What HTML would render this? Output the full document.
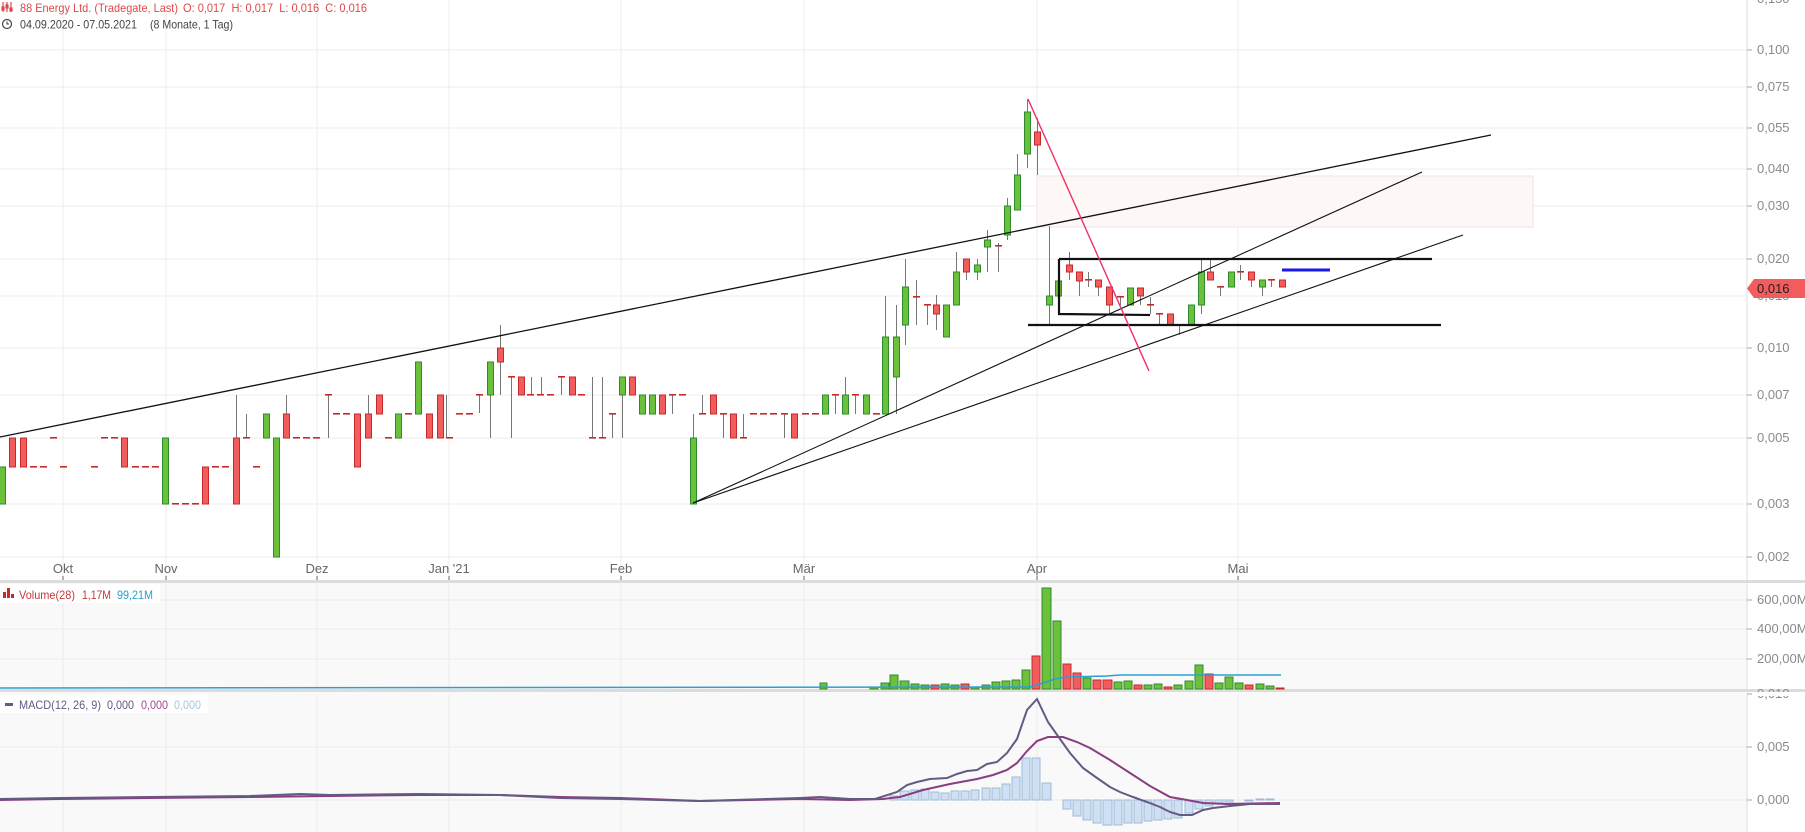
<!DOCTYPE html>
<html><head><meta charset="utf-8">
<style>
html,body{margin:0;padding:0;background:#fff;}
svg{display:block;font-family:"Liberation Sans",sans-serif;}
.g{fill:#6cc13a;stroke:#2e8a2e;stroke-width:1}
.r{fill:#f25c5c;stroke:#c42a2a;stroke-width:1}
.w{stroke:#777;stroke-width:1}
.d{fill:#c42a2a}
.gl{stroke:#ececec;stroke-width:1}
.ax{fill:#8a8a8a;font-size:13px}
.tx{fill:#666;font-size:13px}
.h{fill:#cfe0f4;stroke:#9fbad8;stroke-width:1}
</style></head><body>
<svg width="1805" height="832" viewBox="0 0 1805 832" xmlns="http://www.w3.org/2000/svg">
<g class="gl">
<line x1="0" y1="50" x2="1747" y2="50"/><line x1="0" y1="87" x2="1747" y2="87"/>
<line x1="0" y1="128" x2="1747" y2="128"/><line x1="0" y1="169" x2="1747" y2="169"/>
<line x1="0" y1="206" x2="1747" y2="206"/><line x1="0" y1="259" x2="1747" y2="259"/>
<line x1="0" y1="296" x2="1747" y2="296"/><line x1="0" y1="348" x2="1747" y2="348"/>
<line x1="0" y1="395" x2="1747" y2="395"/><line x1="0" y1="438" x2="1747" y2="438"/>
<line x1="0" y1="504" x2="1747" y2="504"/><line x1="0" y1="557" x2="1747" y2="557"/>
<line x1="63" y1="0" x2="63" y2="580"/><line x1="166" y1="0" x2="166" y2="580"/>
<line x1="317" y1="0" x2="317" y2="580"/><line x1="449" y1="0" x2="449" y2="580"/>
<line x1="621" y1="0" x2="621" y2="580"/><line x1="804" y1="0" x2="804" y2="580"/>
<line x1="1037" y1="0" x2="1037" y2="580"/><line x1="1238" y1="0" x2="1238" y2="580"/>
</g>
<rect x="1037" y="176" width="496" height="51" fill="#fdf7f6" stroke="#f0e6e4" stroke-width="1"/>

<g transform="translate(2,2)" stroke="#e04848" stroke-width="1.2" fill="none">
<line x1="1" y1="0" x2="1" y2="10"/><line x1="5" y1="0" x2="5" y2="10"/><line x1="9" y1="0" x2="9" y2="10"/>
<rect x="0" y="5" width="2" height="3" fill="#e04848"/><rect x="4" y="3" width="2" height="3" fill="#e04848"/><rect x="8" y="6" width="2" height="3" fill="#e04848"/>
</g>
<text x="20" y="12" fill="#e04848" font-size="12" textLength="158" lengthAdjust="spacingAndGlyphs">88 Energy Ltd. (Tradegate, Last)</text>
<text x="183" y="12" fill="#e04848" font-size="12" textLength="184" lengthAdjust="spacingAndGlyphs" xml:space="preserve">O: 0,017  H: 0,017  L: 0,016  C: 0,016</text>
<circle cx="7" cy="24" r="4.5" fill="none" stroke="#444" stroke-width="1.2"/>
<path d="M7 21.5 V24 H9" fill="none" stroke="#444" stroke-width="1.1"/>
<text x="20" y="28.5" fill="#444" font-size="12" textLength="117" lengthAdjust="spacingAndGlyphs">04.09.2020 - 07.05.2021</text>
<text x="150" y="28.5" fill="#444" font-size="12" textLength="83" lengthAdjust="spacingAndGlyphs">(8 Monate, 1 Tag)</text>

<g class="w">
<line x1="236.5" y1="395" x2="236.5" y2="438"/><line x1="246.5" y1="414" x2="246.5" y2="438"/>
<line x1="286.5" y1="395" x2="286.5" y2="414"/><line x1="328.5" y1="395" x2="328.5" y2="438"/>
<line x1="368.5" y1="395" x2="368.5" y2="414"/><line x1="446.5" y1="395" x2="446.5" y2="438"/>
<line x1="479.5" y1="395" x2="479.5" y2="413"/><line x1="490.5" y1="395" x2="490.5" y2="438"/>
<line x1="500.5" y1="325" x2="500.5" y2="395"/><line x1="511.5" y1="377" x2="511.5" y2="438"/>
<line x1="531.5" y1="377" x2="531.5" y2="395"/><line x1="541.5" y1="377" x2="541.5" y2="395"/>
<line x1="561.5" y1="377" x2="561.5" y2="395"/><line x1="592.5" y1="377" x2="592.5" y2="438"/>
<line x1="602.5" y1="377" x2="602.5" y2="438"/><line x1="612.5" y1="414" x2="612.5" y2="438"/>
<line x1="622.5" y1="395" x2="622.5" y2="438"/><line x1="672.5" y1="395" x2="672.5" y2="414"/>
<line x1="693.5" y1="414" x2="693.5" y2="438"/><line x1="702.5" y1="395" x2="702.5" y2="414"/>
<line x1="723.5" y1="414" x2="723.5" y2="438"/><line x1="743.5" y1="414" x2="743.5" y2="438"/>
<line x1="784.5" y1="414" x2="784.5" y2="438"/><line x1="835.5" y1="395" x2="835.5" y2="414"/>
<line x1="845.5" y1="377" x2="845.5" y2="395"/><line x1="855.5" y1="395" x2="855.5" y2="414"/>
<line x1="885.5" y1="296" x2="885.5" y2="337"/><line x1="896.5" y1="305" x2="896.5" y2="414"/>
<line x1="905.5" y1="259" x2="905.5" y2="345"/><line x1="916.5" y1="280" x2="916.5" y2="325"/>
<line x1="927.5" y1="305" x2="927.5" y2="325"/><line x1="936.5" y1="295" x2="936.5" y2="330"/>
<line x1="956.5" y1="252" x2="956.5" y2="280"/><line x1="966.5" y1="259" x2="966.5" y2="280"/>
<line x1="977.5" y1="259" x2="977.5" y2="280"/><line x1="987.5" y1="230" x2="987.5" y2="272"/>
<line x1="998.5" y1="243" x2="998.5" y2="272"/><line x1="1007.5" y1="198" x2="1007.5" y2="240"/>
<line x1="1017.5" y1="154" x2="1017.5" y2="210"/><line x1="1027.5" y1="99" x2="1027.5" y2="168"/>
<line x1="1037.5" y1="118" x2="1037.5" y2="175"/><line x1="1049.5" y1="226" x2="1049.5" y2="325"/>
<line x1="1069.5" y1="252" x2="1069.5" y2="280"/><line x1="1079.5" y1="272" x2="1079.5" y2="296"/>
<line x1="1088.5" y1="272" x2="1088.5" y2="287"/><line x1="1098.5" y1="280" x2="1098.5" y2="296"/>
<line x1="1109.5" y1="287" x2="1109.5" y2="314"/><line x1="1120.5" y1="297" x2="1120.5" y2="305"/>
<line x1="1140.5" y1="288" x2="1140.5" y2="305"/><line x1="1150.5" y1="297" x2="1150.5" y2="314"/>
<line x1="1159.5" y1="314" x2="1159.5" y2="325"/><line x1="1179.5" y1="325" x2="1179.5" y2="335"/>
<line x1="1201.5" y1="259" x2="1201.5" y2="314"/><line x1="1210.5" y1="259" x2="1210.5" y2="280"/>
<line x1="1220.5" y1="287" x2="1220.5" y2="296"/><line x1="1240.5" y1="265" x2="1240.5" y2="280"/>
<line x1="1251.5" y1="272" x2="1251.5" y2="287"/><line x1="1262.5" y1="280" x2="1262.5" y2="296"/>
<line x1="1271.5" y1="280" x2="1271.5" y2="287"/>
</g>
<g class="d">
<rect x="30" y="466" width="7" height="1.6"/><rect x="40" y="466" width="7" height="1.6"/>
<rect x="50" y="437" width="7" height="1.6"/><rect x="60" y="466" width="7" height="1.6"/>
<rect x="91" y="466" width="7" height="1.6"/><rect x="101" y="437" width="7" height="1.6"/>
<rect x="111" y="437" width="7" height="1.6"/><rect x="132" y="466" width="7" height="1.6"/>
<rect x="142" y="466" width="7" height="1.6"/><rect x="152" y="466" width="7" height="1.6"/>
<rect x="172" y="503" width="7" height="1.6"/><rect x="182" y="503" width="7" height="1.6"/>
<rect x="192" y="503" width="7" height="1.6"/><rect x="212" y="466" width="7" height="1.6"/>
<rect x="222" y="466" width="7" height="1.6"/><rect x="243" y="437" width="7" height="1.6"/>
<rect x="253" y="466" width="7" height="1.6"/><rect x="293" y="437" width="7" height="1.6"/>
<rect x="303" y="437" width="7" height="1.6"/><rect x="313" y="437" width="7" height="1.6"/>
<rect x="325" y="394" width="7" height="1.6"/><rect x="333" y="413" width="7" height="1.6"/>
<rect x="343" y="413" width="7" height="1.6"/><rect x="385" y="437" width="7" height="1.6"/>
<rect x="405" y="413" width="7" height="1.6"/><rect x="446" y="437" width="7" height="1.6"/>
<rect x="456" y="413" width="7" height="1.6"/><rect x="466" y="413" width="7" height="1.6"/>
<rect x="476" y="394" width="7" height="1.6"/><rect x="508" y="376" width="7" height="1.6"/>
<rect x="527" y="394" width="7" height="1.6"/><rect x="537" y="394" width="7" height="1.6"/>
<rect x="547" y="394" width="7" height="1.6"/><rect x="558" y="376" width="7" height="1.6"/>
<rect x="578" y="394" width="7" height="1.6"/><rect x="589" y="437" width="7" height="1.6"/>
<rect x="599" y="437" width="7" height="1.6"/><rect x="609" y="413" width="7" height="1.6"/>
<rect x="669" y="394" width="7" height="1.6"/><rect x="679" y="394" width="7" height="1.6"/>
<rect x="699" y="413" width="7" height="1.6"/><rect x="720" y="413" width="7" height="1.6"/>
<rect x="740" y="437" width="7" height="1.6"/><rect x="750" y="413" width="7" height="1.6"/>
<rect x="760" y="413" width="7" height="1.6"/><rect x="770" y="413" width="7" height="1.6"/>
<rect x="781" y="413" width="7" height="1.6"/><rect x="802" y="413" width="7" height="1.6"/>
<rect x="812" y="413" width="7" height="1.6"/><rect x="832" y="394" width="7" height="1.6"/>
<rect x="852" y="394" width="7" height="1.6"/><rect x="873" y="413" width="7" height="1.6"/>
<rect x="913" y="296" width="7" height="1.6"/><rect x="924" y="304" width="7" height="1.6"/>
<rect x="995" y="245" width="7" height="1.6"/><rect x="1085" y="279" width="7" height="1.6"/>
<rect x="1117" y="296" width="7" height="1.6"/><rect x="1147" y="304" width="7" height="1.6"/>
<rect x="1156" y="313" width="7" height="1.6"/><rect x="1217" y="286" width="7" height="1.6"/>
<rect x="1237" y="271" width="7" height="1.6"/><rect x="1268" y="279" width="7" height="1.6"/>
</g>
<g>
<rect class="g" x="-0.5" y="467" width="6" height="37"/>
<rect class="r" x="9.5" y="438" width="6" height="29"/>
<rect class="r" x="20.5" y="438" width="6" height="29"/>
<rect class="r" x="121.5" y="438" width="6" height="29"/>
<rect class="g" x="162.5" y="438" width="6" height="66"/>
<rect class="r" x="202.5" y="467" width="6" height="37"/>
<rect class="r" x="233.5" y="438" width="6" height="66"/>
<rect class="g" x="263.5" y="414" width="6" height="24"/>
<rect class="g" x="273.5" y="438" width="6" height="119"/>
<rect class="r" x="283.5" y="414" width="6" height="24"/>
<rect class="r" x="354.5" y="414" width="6" height="53"/>
<rect class="r" x="365.5" y="414" width="6" height="24"/>
<rect class="r" x="376.5" y="395" width="6" height="19"/>
<rect class="g" x="395.5" y="414" width="6" height="24"/>
<rect class="g" x="415.5" y="362" width="6" height="52"/>
<rect class="r" x="426.5" y="414" width="6" height="24"/>
<rect class="r" x="437.5" y="395" width="6" height="43"/>
<rect class="g" x="487.5" y="362" width="6" height="33"/>
<rect class="r" x="497.5" y="348" width="6" height="14"/>
<rect class="r" x="518.5" y="377" width="6" height="18"/>
<rect class="r" x="569.5" y="377" width="6" height="18"/>
<rect class="g" x="619.5" y="377" width="6" height="18"/>
<rect class="r" x="629.5" y="377" width="6" height="18"/>
<rect class="g" x="639.5" y="395" width="6" height="19"/>
<rect class="g" x="649.5" y="395" width="6" height="19"/>
<rect class="r" x="659.5" y="395" width="6" height="19"/>
<rect class="g" x="690.5" y="438" width="6" height="66"/>
<rect class="r" x="710.5" y="395" width="6" height="19"/>
<rect class="r" x="730.5" y="414" width="6" height="24"/>
<rect class="r" x="791.5" y="414" width="6" height="24"/>
<rect class="g" x="822.5" y="395" width="6" height="19"/>
<rect class="g" x="842.5" y="395" width="6" height="19"/>
<rect class="g" x="863.5" y="395" width="6" height="19"/>
<rect class="g" x="882.5" y="337" width="6" height="77"/>
<rect class="g" x="893.5" y="337" width="6" height="40"/>
<rect class="g" x="902.5" y="287" width="6" height="38"/>
<rect class="r" x="933.5" y="305" width="6" height="9"/>
<rect class="g" x="943.5" y="305" width="6" height="32"/>
<rect class="g" x="953.5" y="272" width="6" height="33"/>
<rect class="r" x="963.5" y="259" width="6" height="13"/>
<rect class="g" x="974.5" y="265" width="6" height="7"/>
<rect class="g" x="984.5" y="240" width="6" height="7"/>
<rect class="g" x="1004.5" y="206" width="6" height="29"/>
<rect class="g" x="1014.5" y="175" width="6" height="35"/>
<rect class="g" x="1024.5" y="112" width="6" height="42"/>
<rect class="r" x="1034.5" y="132" width="6" height="13"/>
<rect class="g" x="1046.5" y="296" width="6" height="9"/>
<rect class="g" x="1055.5" y="281" width="6" height="15"/>
<rect class="r" x="1066.5" y="265" width="6" height="7"/>
<rect class="r" x="1076.5" y="272" width="6" height="9"/>
<rect class="r" x="1095.5" y="280" width="6" height="7"/>
<rect class="r" x="1106.5" y="287" width="6" height="18"/>
<rect class="g" x="1127.5" y="288" width="6" height="17"/>
<rect class="r" x="1137.5" y="288" width="6" height="8"/>
<rect class="r" x="1167.5" y="314" width="6" height="11"/>
<rect class="g" x="1188.5" y="305" width="6" height="20"/>
<rect class="g" x="1198.5" y="272" width="6" height="33"/>
<rect class="r" x="1207.5" y="272" width="6" height="8"/>
<rect class="g" x="1228.5" y="272" width="6" height="15"/>
<rect class="r" x="1248.5" y="272" width="6" height="8"/>
<rect class="g" x="1259.5" y="280" width="6" height="7"/>
<rect class="r" x="1279.5" y="280" width="6" height="7"/>
</g>

<g stroke="#111" fill="none">
<line x1="0" y1="437" x2="1491" y2="135" stroke-width="1.3"/>
<line x1="693" y1="503" x2="1422" y2="172" stroke-width="1.1"/>
<line x1="693" y1="503" x2="1463" y2="235" stroke-width="1.1"/>
<line x1="1059" y1="259" x2="1432" y2="259" stroke-width="2.2"/>
<polyline points="1059,259 1059,314 1150,315" stroke-width="2.2"/>
<line x1="1028" y1="325" x2="1441" y2="325" stroke-width="2.2"/>
</g>
<line x1="1028" y1="99" x2="1149" y2="371" stroke="#f0306a" stroke-width="1.4"/>
<line x1="1282" y1="270" x2="1330" y2="270" stroke="#1a1ae8" stroke-width="3"/>

<line x1="1747" y1="0" x2="1747" y2="832" stroke="#ddd"/>
<g stroke="#aaa">
<line x1="1747" y1="50" x2="1752" y2="50"/><line x1="1747" y1="87" x2="1752" y2="87"/>
<line x1="1747" y1="128" x2="1752" y2="128"/><line x1="1747" y1="169" x2="1752" y2="169"/>
<line x1="1747" y1="206" x2="1752" y2="206"/><line x1="1747" y1="259" x2="1752" y2="259"/>
<line x1="1747" y1="348" x2="1752" y2="348"/><line x1="1747" y1="395" x2="1752" y2="395"/>
<line x1="1747" y1="438" x2="1752" y2="438"/><line x1="1747" y1="504" x2="1752" y2="504"/>
<line x1="1747" y1="557" x2="1752" y2="557"/>
</g>
<g class="ax">
<text x="1757" y="3">0,150</text>
<text x="1757" y="54">0,100</text><text x="1757" y="91">0,075</text>
<text x="1757" y="132">0,055</text><text x="1757" y="173">0,040</text>
<text x="1757" y="210">0,030</text><text x="1757" y="263">0,020</text>
<text x="1757" y="300">0,015</text>
<text x="1757" y="352">0,010</text><text x="1757" y="399">0,007</text>
<text x="1757" y="442">0,005</text><text x="1757" y="508">0,003</text>
<text x="1757" y="561">0,002</text>
</g>
<path d="M1747 288.5 L1754 279 H1805 V298 H1754 Z" fill="#f25c5c"/>
<text x="1757" y="293" font-size="13" fill="#222">0,016</text>

<g class="tx" text-anchor="middle">
<text x="63" y="573">Okt</text><text x="166" y="573">Nov</text><text x="317" y="573">Dez</text>
<text x="449" y="573">Jan '21</text><text x="621" y="573">Feb</text><text x="804" y="573">Mär</text>
<text x="1037" y="573">Apr</text><text x="1238" y="573">Mai</text>
</g>
<g stroke="#666">
<line x1="63" y1="576" x2="63" y2="580"/><line x1="166" y1="576" x2="166" y2="580"/><line x1="317" y1="576" x2="317" y2="580"/>
<line x1="449" y1="576" x2="449" y2="580"/><line x1="621" y1="576" x2="621" y2="580"/><line x1="804" y1="576" x2="804" y2="580"/>
<line x1="1037" y1="576" x2="1037" y2="580"/><line x1="1238" y1="576" x2="1238" y2="580"/>
</g>

<rect x="0" y="580" width="1805" height="3" fill="#dcdcdc"/>
<rect x="0" y="583" width="1747" height="106" fill="#f9f9f9"/>
<rect x="0" y="689" width="1805" height="3" fill="#dcdcdc"/>
<rect x="0" y="692" width="1747" height="140" fill="#f9f9f9"/>
<g class="gl" stroke="#e2e2e2">
<line x1="0" y1="600" x2="1747" y2="600"/><line x1="0" y1="629" x2="1747" y2="629"/><line x1="0" y1="659" x2="1747" y2="659"/>
<line x1="0" y1="694" x2="1747" y2="694"/><line x1="0" y1="747" x2="1747" y2="747"/><line x1="0" y1="800" x2="1747" y2="800"/>
<line x1="63" y1="583" x2="63" y2="689"/><line x1="166" y1="583" x2="166" y2="689"/><line x1="317" y1="583" x2="317" y2="689"/>
<line x1="449" y1="583" x2="449" y2="689"/><line x1="621" y1="583" x2="621" y2="689"/><line x1="804" y1="583" x2="804" y2="689"/>
<line x1="1037" y1="583" x2="1037" y2="689"/><line x1="1238" y1="583" x2="1238" y2="689"/>
<line x1="63" y1="692" x2="63" y2="832"/><line x1="166" y1="692" x2="166" y2="832"/><line x1="317" y1="692" x2="317" y2="832"/>
<line x1="449" y1="692" x2="449" y2="832"/><line x1="621" y1="692" x2="621" y2="832"/><line x1="804" y1="692" x2="804" y2="832"/>
<line x1="1037" y1="692" x2="1037" y2="832"/><line x1="1238" y1="692" x2="1238" y2="832"/>
</g>
<line x1="1747" y1="583" x2="1747" y2="832" stroke="#ddd"/>

<g>
<rect class="g" x="820" y="683" width="7" height="6"/>
<rect class="g" x="870" y="687" width="8" height="2"/>
<rect class="g" x="881" y="683" width="8" height="6"/>
<rect class="g" x="890" y="675" width="8" height="14"/>
<rect class="g" x="900" y="681" width="9" height="8"/>
<rect class="g" x="911" y="684" width="8" height="5"/>
<rect class="g" x="921" y="685" width="8" height="4"/>
<rect class="r" x="931" y="685" width="8" height="4"/>
<rect class="g" x="941" y="684" width="8" height="5"/>
<rect class="g" x="951" y="685" width="8" height="4"/>
<rect class="r" x="961" y="684" width="8" height="5"/>
<rect class="g" x="971" y="687" width="8" height="2"/>
<rect class="g" x="982" y="685" width="8" height="4"/>
<rect class="g" x="992" y="682" width="8" height="7"/>
<rect class="g" x="1002" y="681" width="8" height="8"/>
<rect class="g" x="1012" y="680" width="8" height="9"/>
<rect class="g" x="1022" y="670" width="8" height="19"/>
<rect class="r" x="1032" y="656" width="8" height="33"/>
<rect class="g" x="1042" y="588" width="9" height="101"/>
<rect class="g" x="1053" y="621" width="8" height="68"/>
<rect class="r" x="1063" y="664" width="8" height="25"/>
<rect class="r" x="1073" y="673" width="8" height="16"/>
<rect class="g" x="1083" y="678" width="8" height="11"/>
<rect class="r" x="1093" y="680" width="8" height="9"/>
<rect class="r" x="1103" y="680" width="9" height="9"/>
<rect class="g" x="1114" y="682" width="8" height="7"/>
<rect class="g" x="1124" y="681" width="8" height="8"/>
<rect class="r" x="1134" y="685" width="8" height="4"/>
<rect class="g" x="1144" y="685" width="8" height="4"/>
<rect class="g" x="1154" y="684" width="8" height="5"/>
<rect class="r" x="1164" y="687" width="8" height="2"/>
<rect class="g" x="1174" y="685" width="8" height="4"/>
<rect class="g" x="1185" y="681" width="8" height="8"/>
<rect class="g" x="1195" y="665" width="8" height="24"/>
<rect class="r" x="1205" y="674" width="8" height="15"/>
<rect class="g" x="1215" y="683" width="8" height="6"/>
<rect class="g" x="1225" y="677" width="8" height="12"/>
<rect class="g" x="1235" y="683" width="8" height="6"/>
<rect class="r" x="1245" y="685" width="8" height="4"/>
<rect class="g" x="1256" y="684" width="8" height="5"/>
<rect class="g" x="1266" y="686" width="8" height="3"/>
<rect class="r" x="1276" y="688" width="8" height="1"/>
</g>
<polyline fill="none" stroke="#2e9fd0" stroke-width="1.6" points="0,688 1030,687 1040,684 1055,679 1067,677 1107,676 1120,675 1281,675"/>
<g stroke="#aaa">
<line x1="1747" y1="600" x2="1752" y2="600"/><line x1="1747" y1="629" x2="1752" y2="629"/><line x1="1747" y1="659" x2="1752" y2="659"/>
<line x1="1747" y1="694" x2="1752" y2="694"/><line x1="1747" y1="747" x2="1752" y2="747"/><line x1="1747" y1="800" x2="1752" y2="800"/>
</g>
<g class="ax">
<text x="1757" y="604">600,00M</text><text x="1757" y="633">400,00M</text><text x="1757" y="663">200,00M</text>
<text x="1757" y="698">0,010</text><text x="1757" y="751">0,005</text><text x="1757" y="804">0,000</text>
</g>
<rect x="0" y="583" width="1747" height="2" fill="#f9f9f9"/>
<rect x="0" y="692" width="1747" height="3" fill="#f9f9f9"/>
<rect x="1752" y="692" width="53" height="4" fill="#fff"/>

<rect x="0" y="584" width="160" height="19" fill="#fff"/>
<rect x="3" y="592" width="3" height="6" fill="#c42a2a"/><rect x="7" y="588" width="3" height="10" fill="#c42a2a"/><rect x="11" y="594" width="3" height="4" fill="#c42a2a"/>
<text x="19" y="599" font-size="12" fill="#c43a3a" textLength="56" lengthAdjust="spacingAndGlyphs">Volume(28)</text>
<text x="82" y="599" font-size="12" fill="#c43a3a" textLength="29" lengthAdjust="spacingAndGlyphs">1,17M</text>
<text x="117" y="599" font-size="12" fill="#2e9fd0" textLength="36" lengthAdjust="spacingAndGlyphs">99,21M</text>

<g>
<rect class="h" x="890" y="796" width="8" height="4"/>
<rect class="h" x="900" y="791" width="9" height="9"/>
<rect class="h" x="911" y="790" width="8" height="10"/>
<rect class="h" x="921" y="789" width="8" height="11"/>
<rect class="h" x="931" y="792" width="8" height="8"/>
<rect class="h" x="941" y="793" width="8" height="7"/>
<rect class="h" x="951" y="791" width="8" height="9"/>
<rect class="h" x="961" y="791" width="8" height="9"/>
<rect class="h" x="971" y="790" width="8" height="10"/>
<rect class="h" x="982" y="788" width="8" height="12"/>
<rect class="h" x="992" y="788" width="8" height="12"/>
<rect class="h" x="1002" y="784" width="8" height="16"/>
<rect class="h" x="1012" y="777" width="8" height="23"/>
<rect class="h" x="1022" y="758" width="8" height="42"/>
<rect class="h" x="1032" y="758" width="8" height="42"/>
<rect class="h" x="1042" y="783" width="9" height="17"/>
<rect class="h" x="1063" y="800" width="8" height="9"/>
<rect class="h" x="1073" y="800" width="8" height="16"/>
<rect class="h" x="1083" y="800" width="8" height="20"/>
<rect class="h" x="1093" y="800" width="8" height="23"/>
<rect class="h" x="1103" y="800" width="9" height="25"/>
<rect class="h" x="1114" y="800" width="8" height="25"/>
<rect class="h" x="1124" y="800" width="8" height="23"/>
<rect class="h" x="1134" y="800" width="8" height="23"/>
<rect class="h" x="1144" y="800" width="8" height="21"/>
<rect class="h" x="1154" y="800" width="8" height="20"/>
<rect class="h" x="1164" y="800" width="8" height="19"/>
<rect class="h" x="1174" y="800" width="8" height="18"/>
<rect class="h" x="1185" y="800" width="8" height="13"/>
<rect class="h" x="1195" y="800" width="8" height="9"/>
<rect class="h" x="1205" y="800" width="8" height="6"/>
<rect class="h" x="1215" y="800" width="8" height="3"/>
<rect class="h" x="1225" y="800" width="8" height="2"/>
<rect class="h" x="1245" y="800" width="8" height="1"/>
<rect class="h" x="1256" y="799" width="8" height="1"/>
<rect class="h" x="1266" y="799" width="8" height="1"/>
</g>
<polyline fill="none" stroke="#8b3d82" stroke-width="2" points="0,800 60,799 150,798 250,797 330,796 420,795 500,795 560,797 620,798 700,801 800,799 850,800 883,799 900,797 923,790 950,784 977,779 993,775 1007,770 1017,763 1027,751 1037,741 1048,737 1063,737 1077,742 1090,748 1110,760 1130,773 1150,786 1170,797 1187,800 1203,803 1227,804 1280,803"/>
<polyline fill="none" stroke="#645a82" stroke-width="2" points="0,799 60,798 150,797 250,796 300,794 330,795 420,794 500,795 560,798 620,799 700,801 800,798 820,797 850,799 875,799 897,792 907,785 917,782 930,779 947,778 957,774 967,771 977,770 987,764 997,762 1007,753 1017,739 1027,710 1037,699 1048,722 1060,739 1070,753 1083,768 1097,778 1110,787 1120,792 1133,797 1147,802 1160,807 1170,812 1180,815 1192,815 1203,810 1213,808 1230,806 1250,804 1280,804"/>

<rect x="0" y="695" width="208" height="18" fill="#fff"/>
<rect x="5" y="703" width="8" height="3" fill="#645a82"/>
<text x="19" y="709" font-size="12" fill="#645a82" textLength="82" lengthAdjust="spacingAndGlyphs">MACD(12, 26, 9)</text>
<text x="107" y="709" font-size="12" fill="#645a82" textLength="27" lengthAdjust="spacingAndGlyphs">0,000</text>
<text x="141" y="709" font-size="12" fill="#a04a90" textLength="27" lengthAdjust="spacingAndGlyphs">0,000</text>
<text x="174" y="709" font-size="12" fill="#a8c4e0" textLength="27" lengthAdjust="spacingAndGlyphs">0,000</text>
</svg>
</body></html>
